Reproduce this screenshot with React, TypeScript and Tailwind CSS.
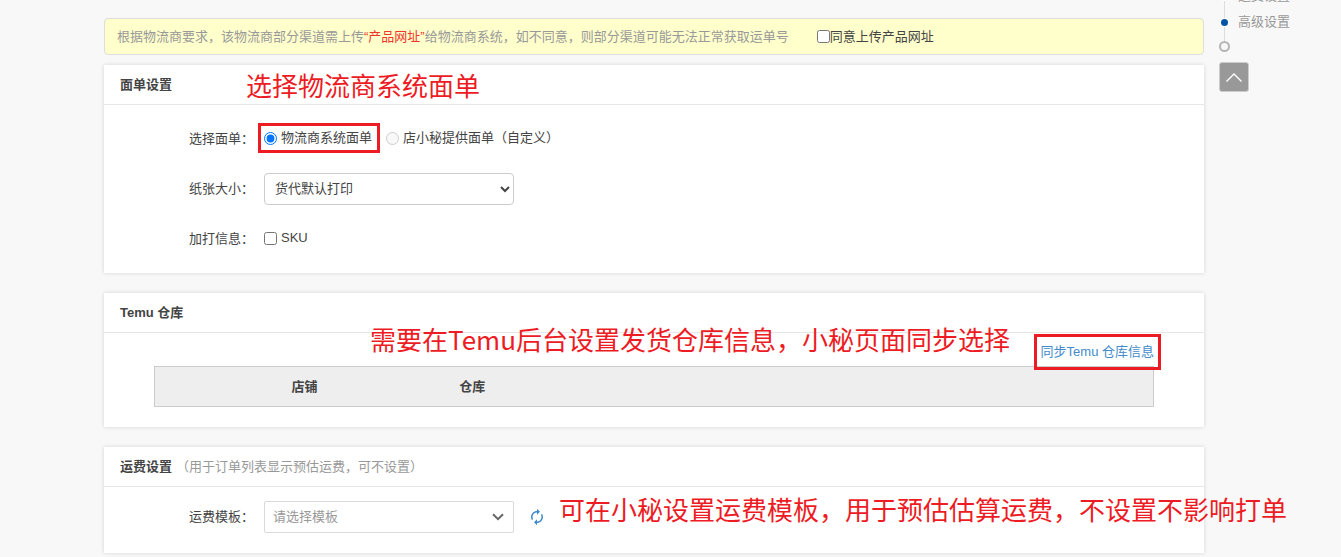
import React from "react";
import { MdAutorenew } from "react-icons/md";

function Card({ title, note, children }: { title: string; note?: string; children: React.ReactNode }) {
  return (
    <section className="relative bg-white shadow-[0_0_4px_rgba(0,0,0,0.15)]">
      <header className="flex h-10 items-center gap-1 border-b border-[#e7e7e7] px-4">
        <h2 className="font-bold">{title}</h2>
        {note && <span className="text-[#999]">{note}</span>}
      </header>
      {children}
    </section>
  );
}

function Row({ label, htmlFor, children }: { label: string; htmlFor?: string; children: React.ReactNode }) {
  return (
    <div className="flex h-8 items-center gap-2.5">
      <label htmlFor={htmlFor} className="w-[150px] text-right">
        {label}
      </label>
      {children}
    </div>
  );
}

const note =
  "pointer-events-none absolute whitespace-nowrap font-['Noto_Sans_CJK_SC',sans-serif] text-[26px] leading-8 text-[#ed1c24]";

export default function App() {
  return (
    <div className="min-h-screen overflow-hidden bg-[#f8f8f8] font-['Liberation_Sans','Noto_Sans_CJK_SC',sans-serif] text-[13px] leading-5 text-[#444]">
      <div className="flex gap-4 pl-[104px]">
        <main className="min-w-0 flex-1 pt-[18px]">
          <div className="mb-2.5 flex h-[37px] items-center gap-7 rounded border border-[#ddd] bg-[#ffc] px-3 whitespace-nowrap">
            <p className="text-[#999]">
              根据物流商要求，该物流商部分渠道需上传<span className="text-[#f0352b]">“产品网址”</span>
              给物流商系统，如不同意，则部分渠道可能无法正常获取运单号
            </p>
            <label className="flex items-center">
              <input type="checkbox" className="h-[13px] w-[13px]" />
              同意上传产品网址
            </label>
          </div>

          <div className="flex flex-col gap-5">
            <Card title="面单设置">
              <div className="flex flex-col gap-[18px] py-[18px]">
                <Row label="选择面单：">
                  <div className="flex gap-3.5 pb-0.5">
                    <label className="relative flex items-center gap-1">
                      <input type="radio" name="sheet" defaultChecked className="h-[13px] w-[13px]" />
                      物流商系统面单
                      <span className="absolute -inset-x-1.5 -inset-y-[5px] -right-2 border-3 border-[#ed1c24]" />
                    </label>
                    <label className="flex items-center gap-1">
                      <input type="radio" name="sheet" disabled className="h-[13px] w-[13px]" />
                      店小秘提供面单（自定义）
                    </label>
                  </div>
                </Row>
                <Row label="纸张大小：" htmlFor="paper">
                  <select id="paper" className="h-8 w-[250px] rounded border border-[#ccc] bg-white px-1.5 pb-0.5">
                    <option>货代默认打印</option>
                  </select>
                </Row>
                <Row label="加打信息：">
                  <label className="flex items-center gap-1 pb-0.5">
                    <input type="checkbox" className="h-[13px] w-[13px]" />
                    SKU
                  </label>
                </Row>
              </div>
              <p className={`${note} left-[142px] top-1`}>选择物流商系统面单</p>
            </Card>

            <Card title="Temu 仓库">
              <div className="px-[50px] pb-5">
                <div className="flex h-[33px] items-center justify-end pt-1">
                  <a href="#sync" className="relative text-[#428bca]">
                    同步Temu 仓库信息
                    <span className="absolute -inset-x-[7px] -inset-y-2 border-3 border-[#ed1c24]" />
                  </a>
                </div>
                <table className="w-full table-fixed border-collapse border border-[#ccc] bg-[#eee]">
                  <thead>
                    <tr className="h-10">
                      <th className="w-[30%] text-center font-bold">店铺</th>
                      <th className="pl-[5px] text-left font-bold">仓库</th>
                    </tr>
                  </thead>
                </table>
              </div>
              <p className={`${note} left-[266px] top-[30px]`}>需要在Temu后台设置发货仓库信息，小秘页面同步选择</p>
            </Card>

            <Card title="运费设置" note="（用于订单列表显示预估运费，可不设置）">
              <div className="pt-3.5 pb-5">
                <Row label="运费模板：" htmlFor="template">
                  <div className="relative">
                    <select
                      id="template"
                      className="h-8 w-[250px] appearance-none rounded-xs border border-[#d9d9d9] bg-white px-2 text-[#999]"
                    >
                      <option>请选择模板</option>
                    </select>
                    <svg
                      viewBox="0 0 12 8"
                      className="pointer-events-none absolute right-2.5 top-3 h-2 w-3 fill-none stroke-[#666] stroke-2"
                    >
                      <path d="M1 1.2 6 6.2 11 1.2" />
                    </svg>
                  </div>
                  <button aria-label="刷新" className="ml-1 text-[#428bca]">
                    <MdAutorenew size={18} />
                  </button>
                </Row>
              </div>
              <p className={`${note} left-[455px] top-[46px]`}>可在小秘设置运费模板，用于预估估算运费，不设置不影响打单</p>
            </Card>
          </div>
        </main>

        <nav className="-mt-[17px] w-[121px] text-[#999]">
          <div className="relative flex flex-col">
            <span className="absolute top-4 left-1 h-12 w-px bg-[#ddd]" />
            <a href="#freight" className="relative flex h-[26px] items-center gap-[9px]">
              <span className="h-[9px] w-[9px] rounded-full bg-white" />
              运费设置
            </a>
            <a href="#advanced" className="relative flex h-[26px] items-center gap-[9px]">
              <span className="flex h-[9px] w-[9px] items-center justify-center rounded-full bg-white">
                <span className="h-[7px] w-[7px] rounded-full bg-[#0053a6]" />
              </span>
              高级设置
            </a>
            <span className="relative mt-1.5 -ml-px h-[11px] w-[11px] rounded-full border-2 border-[#b5b5b5] bg-[#f8f8f8]" />
          </div>
          <button
            aria-label="返回顶部"
            className="mt-2.5 -ml-px flex h-[30px] w-[30px] items-center justify-center rounded-[3px] border border-[#ccc] bg-[#999]"
          >
            <svg viewBox="0 0 16 9" className="h-[9px] w-4 fill-none stroke-white stroke-[1.4]">
              <path d="M.5 8.5 8 1l7.500 7.500" />
            </svg>
          </button>
        </nav>
      </div>
    </div>
  );
}
